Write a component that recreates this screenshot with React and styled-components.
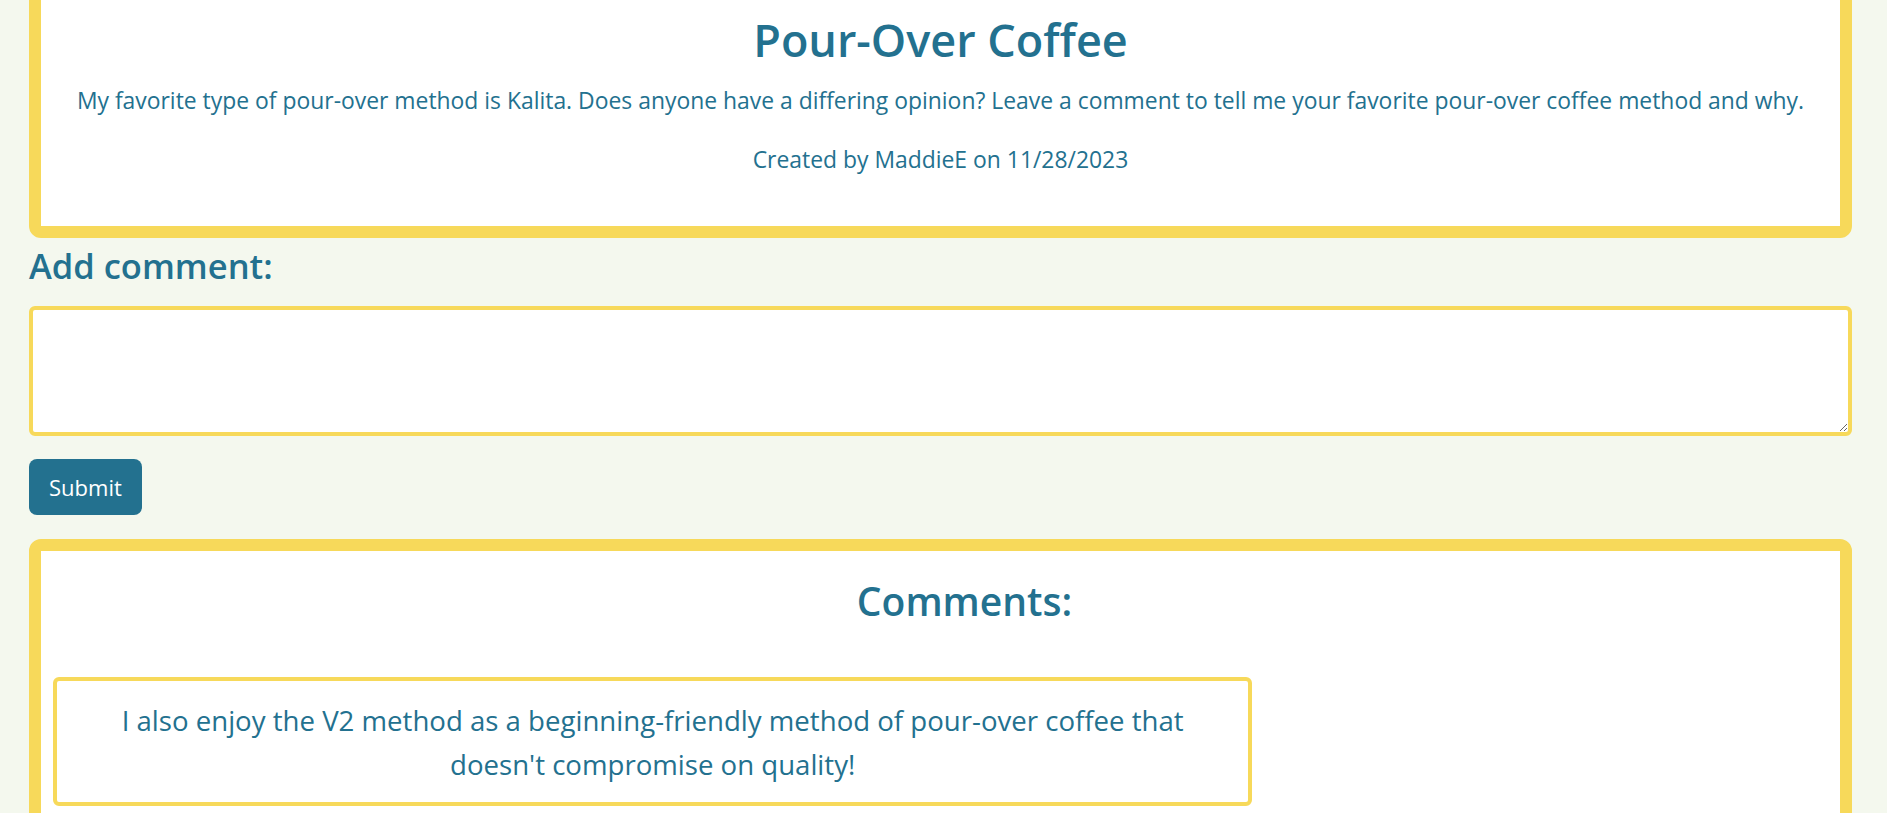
import React from "react";
import styled, { createGlobalStyle } from "styled-components";

const teal = "#23718f";
const yellow = "#f7d95a";

const GlobalStyle = createGlobalStyle`
  html, body {
    margin: 0;
    padding: 0;
    overflow: hidden;
    background: #f4f8ee;
  }
  body {
    font-family: "Open Sans", "Noto Sans", sans-serif;
    color: ${teal};
  }
  * { box-sizing: border-box; }
`;

const Page = styled.main`
  display: flex;
  flex-direction: column;
  padding: 0 35px 0 29px;
`;

const Card = styled.section`
  background: #ffffff;
  border: 12px solid ${yellow};
  border-radius: 12px;
  text-align: center;
`;

const PostCard = styled(Card)`
  margin-top: -40px;
  padding: 41px 24px 49px;
`;

const PostTitle = styled.h1`
  margin: 0 0 17px;
  font-size: 45px;
  font-weight: 600;
  line-height: 1.2;
`;

const PostText = styled.p`
  margin: 0 0 ${(p) => p.$gap || 0}px;
  font-size: 22.9px;
  line-height: 1.5;
  white-space: nowrap;
`;

const SectionLabel = styled.label`
  display: block;
  margin: 7px 0 19px;
  font-size: 34.5px;
  font-weight: 600;
  line-height: 1.2;
`;

const CommentInput = styled.textarea`
  display: block;
  width: 100%;
  height: 130px;
  border: 4px solid ${yellow};
  border-radius: 6px;
  background: #fff;
  outline: none;
  font-family: inherit;
  font-size: 20px;
  color: ${teal};
  padding: 8px 12px;
`;

const SubmitButton = styled.button`
  align-self: flex-start;
  margin-top: 23px;
  background: ${teal};
  color: #fff;
  border: none;
  border-radius: 8px;
  padding: 10px 20px;
  font-family: inherit;
  font-size: 22px;
  line-height: 36px;
  cursor: pointer;
`;

const CommentsCard = styled(Card)`
  margin-top: 24px;
  padding: 27px 0 60px;
`;

const CommentsTitle = styled.h2`
  margin: 0 0 53px;
  padding-left: 48px;
  font-size: 39px;
  font-weight: 600;
  line-height: 1.2;
`;

const CommentRow = styled.div`
  display: flex;
`;

const CommentBox = styled.article`
  flex: 0 0 66.667%;
  margin-left: 12px;
  border: 4px solid ${yellow};
  border-radius: 6px;
  padding: 18px 40px 16px;
  text-align: center;
  font-size: 27.6px;
  line-height: 43.3px;
`;

export default function App() {
  return (
    <>
      <GlobalStyle />
      <Page>
        <PostCard>
          <PostTitle>Pour-Over Coffee</PostTitle>
          <PostText $gap={24.5}>
            My favorite type of pour-over method is Kalita. Does anyone have a differing
            opinion? Leave a comment to tell me your favorite pour-over coffee method and why.
          </PostText>
          <PostText>Created by MaddieE on 11/28/2023</PostText>
        </PostCard>

        <SectionLabel htmlFor="comment">Add comment:</SectionLabel>
        <CommentInput id="comment" />
        <SubmitButton type="button">Submit</SubmitButton>

        <CommentsCard>
          <CommentsTitle>Comments:</CommentsTitle>
          <CommentRow>
            <CommentBox>
              I also enjoy the V2 method as a beginning-friendly method of pour-over coffee that
              doesn't compromise on quality!
            </CommentBox>
          </CommentRow>
        </CommentsCard>
      </Page>
    </>
  );
}
